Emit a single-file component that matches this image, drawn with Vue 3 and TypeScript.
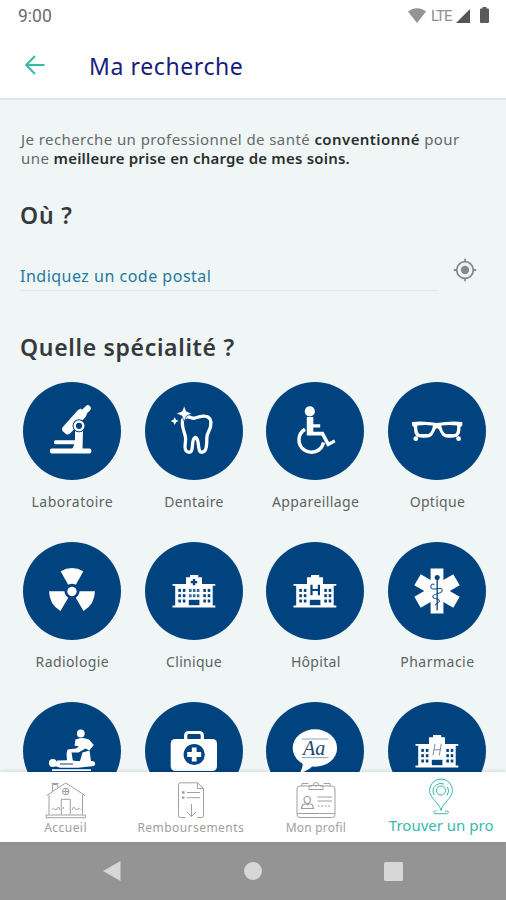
<script setup lang="ts">
type IconName =
  | 'microscope' | 'tooth' | 'wheelchair' | 'glasses'
  | 'radiation' | 'clinic' | 'hospital' | 'starOfLife'
  | 'physio' | 'kit' | 'speech' | 'centre'

interface Speciality {
  label?: string
  icon: IconName
  spacing?: string
}

interface Tab {
  label: string
  icon: 'home' | 'document' | 'badge' | 'pin'
  active: boolean
  spacing: string
}

const specialities: Speciality[] = [
  { label: 'Laboratoire', icon: 'microscope', spacing: '0.5px' },
  { label: 'Dentaire', icon: 'tooth', spacing: '0.35px' },
  { label: 'Appareillage', icon: 'wheelchair', spacing: '0.4px' },
  { label: 'Optique', icon: 'glasses', spacing: '0.3px' },
  { label: 'Radiologie', icon: 'radiation', spacing: '0.4px' },
  { label: 'Clinique', icon: 'clinic', spacing: '0.3px' },
  { label: 'Hôpital', icon: 'hospital', spacing: '0.3px' },
  { label: 'Pharmacie', icon: 'starOfLife', spacing: '0.5px' },
  { icon: 'physio' },
  { icon: 'kit' },
  { icon: 'speech' },
  { icon: 'centre' },
]

const tabs: Tab[] = [
  { label: 'Accueil', icon: 'home', active: false, spacing: '0.45px' },
  { label: 'Remboursements', icon: 'document', active: false, spacing: '0.45px' },
  { label: 'Mon profil', icon: 'badge', active: false, spacing: '0.2px' },
  { label: 'Trouver un pro', icon: 'pin', active: true, spacing: '0px' },
]

const windowColumns = [33.3, 37.8, 58.3, 62.7]
const windowRows = [51.6, 56.9, 62.2]
</script>

<template>
  <div class="phone">
    <div class="status">
      <span class="clock">9:00</span>
      <div class="signals">
        <svg width="18" height="15" viewBox="0 0 18 15"><path d="M0 3.600C5-1 13-1 18 3.600L9 15Z" fill="#949494" /></svg>
        <span class="lte">LTE</span>
        <svg class="cell" width="14" height="14" viewBox="0 0 14 14"><path d="M14 0V14H0Z" fill="#555" /></svg>
        <svg width="9" height="16" viewBox="0 0 9 16"><path d="M2.500 0h4v1.600H8q1 0 1 1V15q0 1-1 1H1q-1 0-1-1V2.600q0-1 1-1h1.500z" fill="#5a5a5a" /></svg>
      </div>
    </div>

    <header class="header">
      <svg class="back" width="20" height="20" viewBox="0 0 20 20"><path d="M19.500 10H1.500M10 1L1.200 10L10 19" fill="none" stroke="#35b9ab" stroke-width="2" /></svg>
      <h1>Ma recherche</h1>
    </header>

    <main class="content">
      <p class="intro">
        <span class="line">Je recherche un professionnel de santé <b>conventionné</b> pour</span>
        <span class="line second">une <b>meilleure prise en charge de mes soins.</b></span>
      </p>
      <h2 class="where">Où ?</h2>
      <div class="field">
        <div class="input">Indiquez un code postal</div>
        <svg class="locate" width="24" height="24" viewBox="0 0 24 24" fill="none" stroke="#858a8b">
          <circle cx="12" cy="12" r="8.300" stroke-width="1.800" />
          <path d="M12 .8V4M12 20v3.200M.8 12H4M20 12h3.200" stroke-width="1.800" />
          <circle cx="12" cy="12" r="4.200" fill="#858a8b" stroke="none" />
        </svg>
      </div>
      <h2 class="which">Quelle spécialité ?</h2>

      <div class="grid">
        <div v-for="item in specialities" :key="item.icon" class="cell-item">
          <div class="disc">
            <svg width="98" height="98" viewBox="0 0 98 98" fill="#fff">
              <g v-if="item.icon === 'microscope'">
                <path d="M60.500 30.500L64.800 26.300" stroke="#fff" stroke-width="6" stroke-linecap="round" />
                <path d="M54.500 28.500L57.500 26.500L64 32L62.500 35L48 50.500Q46 53.500 43 52L39.500 49Q38 47 40 44.800Z" />
                <path d="M52 48.500H60L59.500 68H48.500Q52 63 52 56Z" />
                <circle cx="56" cy="43.800" r="6.500" fill="#00437e" />
                <circle cx="56" cy="43.800" r="4.300" fill="#00437e" stroke="#fff" stroke-width="2.400" />
                <rect x="31" y="58.200" width="22" height="4" rx="1.500" />
                <rect x="27" y="66.500" width="41.300" height="5" rx="1.800" />
              </g>
              <g v-else-if="item.icon === 'tooth'">
                <path d="M37.300 41Q37 35.500 42 34.800C45.500 34.300 46 36.800 49.500 36.200C53 35 56 33.600 60 34.200C65 34.800 66.800 38.500 65.600 44C65 48.500 61.800 51 61.800 56C61.800 60 62 64 60.400 68Q58.500 71 55.500 70C53 68 54 62 52.500 58Q50.300 53 48.300 58C46.800 62 48.300 68 45.500 70Q42.300 71 40.500 68C39 64 41 60 40.600 56C40 50.500 37.500 48 37.300 41Z" fill="none" stroke="#fff" stroke-width="3.300" />
                <path d="M39.200 23.800L41.400 29.200L47 31.600L41.400 34L39.200 39.600L37 34L31 31.600L37 29.200Z" stroke="#00437e" stroke-width=".7" />
                <path d="M29.700 35.300L31 37.700L33.700 39L31 40.300L29.700 43L28.400 40.300L25.600 39L28.400 37.700Z" />
              </g>
              <g v-else-if="item.icon === 'wheelchair'">
                <circle cx="43.800" cy="29.400" r="5.100" />
                <path d="M40.800 35H47.300V42.300H54.200V45.500H47.300V49.700H57.500L63 60L68.200 57.500L69.500 60.300L61.500 64.800L55.500 53.500H40.800Z" />
                <path d="M39 47.200A12.400 12.400 0 1 0 57.500 60.500" fill="none" stroke="#fff" stroke-width="3.500" />
              </g>
              <g v-else-if="item.icon === 'glasses'">
                <path fill-rule="evenodd" d="M24 40Q35 38.600 49 41Q63 38.600 74.300 40V43.500L72.500 45C72.500 49 72 53 69 54.700C65 56 59 56.200 56 54.800C53 53 52 49 50.500 46.700Q49 45.600 47.800 46.700C46.500 49 45 53 42.500 54.800C39 56.200 33 56 29.300 54.700C26.500 53 26 49 25.800 45L24 43.500ZM29.400 43.500C29 47 29.600 51.500 32 52H40C42.700 51.500 44.500 47 45 43.500Q37 42.600 29.400 43.500ZM69 43.500Q61 42.600 53.300 43.500C53.800 47 55.500 51.500 58.500 52H66.500C69 51.500 69.400 47 69 43.500Z" />
                <circle cx="27.800" cy="56.700" r="2.400" /><circle cx="70.600" cy="56.700" r="2.400" />
              </g>
              <g v-else-if="item.icon === 'radiation'" transform="translate(0 -4.300)">
                <g v-for="angle in [0, 120, 240]" :key="angle" :transform="`rotate(${angle} 49 53.500)`">
                  <path d="M45.200 47L37.600 33.600Q49 27.200 60.400 33.600L52.800 47Q49 45.200 45.200 47Z" />
                </g>
                <circle cx="49" cy="53.800" r="4.700" />
              </g>
              <g v-else-if="item.icon === 'clinic' || item.icon === 'hospital' || item.icon === 'centre'" transform="translate(0 -4.700)">
                <path d="M27.500 46.700H41V40H45V37.800H53.200V40H57V46.700H70.300V48.500H67.700V68.300H70.300V70.300H27.500V68.300H30.200V48.500H27.500Z" />
                <g fill="#00437e">
                  <template v-for="x in windowColumns" :key="x">
                    <rect v-for="y in windowRows" :key="y" :x="x" :y="y" width="2.600" height="3" />
                  </template>
                  <rect x="43.800" y="62.500" width="10.600" height="5.400" />
                </g>
                <g v-if="item.icon === 'clinic'" fill="#00437e">
                  <path d="M47.800 41.700H50.200V43.600H52.200V46H50.200V48H47.800V46H45.800V43.600H47.800Z" />
                  <path d="M44 51.600h2.600v3H44zM47.900 51.600h2.600v3h-2.600zM51.800 51.600h2.600v3h-2.600zM44 56.900h2.600v3H44zM47.900 56.900h2.600v3h-2.600zM51.800 56.900h2.600v3h-2.600z" opacity=".8" />
                </g>
                <path v-else-if="item.icon === 'hospital'" d="M45.500 47.500V58M52.900 47.500V58M45.500 52.700H52.900" stroke="#00437e" stroke-width="2.200" />
                <path v-else d="M47 46.500L45 58M53.300 46.500L51.300 58M46 52.500H52.400" stroke="#7d8da8" stroke-width="1" />
              </g>
              <g v-else-if="item.icon === 'starOfLife'" transform="translate(0 -4.500)">
                <rect v-for="angle in [0, 60, 120]" :key="angle" x="42.600" y="31" width="12.800" height="45" :transform="`rotate(${angle} 49 53.500)`" />
                <g fill="none" stroke="#00437e">
                  <path d="M49.200 40V73" stroke-width="1.300" />
                  <path d="M46.500 47C43 45 41 51 45 51.500C50 52 54 49 54.200 53C54 57 45 55.500 44.800 59C45 62 51.500 60.500 51.500 63.500C51 66 47 65.500 47.500 68" stroke-width="1.200" opacity=".8" />
                </g>
                <circle cx="49.200" cy="40" r="2.500" fill="#00437e" />
              </g>
              <g v-else-if="item.icon === 'physio'">
                <circle cx="57.800" cy="31.500" r="3.900" />
                <path d="M52.500 37.500Q59 34.500 66 37.500L70.800 43L66.300 48.500L62.500 46.500L55.500 50.500L48.500 50.500L50 59.500L57 61V64H44.500L43.500 52L44.500 47.500L53 46.500L56 44.500L51.500 43.500Z" />
                <path d="M59.500 50.500L66.500 48.500L68 59H57Z" />
                <circle cx="29.800" cy="61" r="3.900" />
                <path d="M34 58.600Q45 57.500 54 59L70 59Q74 61 71 64L55 65.800H37Q33 64 31 64Z" />
                <path d="M37 62H50" stroke="#00437e" />
                <rect x="29" y="67.200" width="39" height="1.800" />
              </g>
              <g v-else-if="item.icon === 'kit'">
                <path d="M40.700 38V33.500Q40.700 30.500 43.700 30.500H54.300Q57.300 30.500 57.300 33.500V38" fill="none" stroke="#fff" stroke-width="3.200" />
                <rect x="25.700" y="37" width="46.300" height="32" rx="4.500" />
                <circle cx="49.200" cy="52.500" r="10.600" fill="#00437e" />
                <path d="M46.800 45.500H51.600V50.100H56.200V54.900H51.600V59.500H46.800V54.900H42.200V50.100H46.800Z" />
              </g>
              <g v-else>
                <ellipse cx="48.900" cy="46" rx="22.200" ry="18.800" />
                <path d="M37 60Q37 66 33.500 71.500Q42 69 48 63Z" />
                <path d="M35.800 37H62.500M35.800 55.600H62.500" stroke="#8ca4c2" stroke-width="1" />
                <text x="37" y="52.700" class="script">Aa</text>
              </g>
            </svg>
          </div>
          <span v-if="item.label" class="label" :style="{ letterSpacing: item.spacing }">{{ item.label }}</span>
        </div>
      </div>
    </main>

    <nav class="tabs">
      <div v-for="tab in tabs" :key="tab.label" class="tab" :class="{ active: tab.active }">
        <svg width="42" height="38" viewBox="0 0 42 38" fill="none" stroke="currentColor" stroke-width="1">
          <g v-if="tab.icon === 'home'">
            <path d="M1.500 14.500L20.700 2L40 14.500M4 14V33.500M37.500 14V33.500M7.500 10V3.500H12.700V6.500M6.800 2.500H13.500" />
            <rect x="1.300" y="34" width="39" height="2.700" />
            <circle cx="20.700" cy="10.500" r="3.300" /><path d="M17.500 10.500H24M20.700 7.300V13.700" />
            <path d="M16.300 33.500V18.300H25.300V33.500M18.300 26V28M6.500 29L8.500 27.300L11 29L13.500 26L15 29M27 29L28.700 26L31.500 29L34 27.300L35.500 29" />
          </g>
          <g v-else-if="tab.icon === 'document'">
            <path d="M15.500 36.500H10.500Q8.500 36.500 8.500 34.500V3.500Q8.500 1.800 10.500 1.800H27.500L33.500 7.500V34.500Q33.500 36.500 31.500 36.500H27M27.500 2V7.500H33.500M17 11.500H30M17 16.700H30M21.500 23V35.500M17 31L21.500 35.500L26 31" />
            <path d="M12 11.500h2.500M12 16.700h2.500" stroke-width="2.300" />
          </g>
          <g v-else-if="tab.icon === 'badge'">
            <path d="M17 5H5Q2 5 2 8V33.500Q2 36.500 5 36.500H37.500Q40 36.500 40 33.500V8Q40 5 37.500 5H25M2 32.500H40M14 8.500V4.500H28V8.500ZM7 5V2.500H13.500M28.500 2.500H35V5M18 4.500Q18 1.500 21 1.500Q24 1.500 24 4.500M21 4V6M22.500 16H37M22.500 20H37" />
            <path d="M22.500 25H35" stroke-dasharray="2 1.500" />
            <path d="M9 18.500Q9 15.500 12.500 15.500Q15.500 15.500 15.500 18.500Q15 22.500 12.500 22.500Q9.500 22.500 9 18.500ZM6.500 27.500L7.500 24L11 22.500L12.500 24L14 22.500L17.500 24L18.500 27.500Z" stroke-width="1.200" />
          </g>
          <g v-else>
            <path d="M21 32.500C19.500 25 9.500 20 9.500 12.500A11.500 11.500 0 0 1 32.500 12.500C32.500 20 22.500 25 21 32.500ZM14 17Q11.500 11 15.500 7.500Q19 4 24 6M27.500 9Q30 13 27 17.500M16.500 33H14.500Q12.500 34.500 14.500 35.700H27.500Q29.500 34.500 27.500 33H25" />
            <circle cx="21" cy="12.500" r="4.500" />
          </g>
        </svg>
        <span :style="{ letterSpacing: tab.spacing }">{{ tab.label }}</span>
      </div>
    </nav>

    <div class="system">
      <svg width="18" height="20" viewBox="0 0 18 20"><path d="M17.500 0V20L0 10Z" fill="#d7d7d7" /></svg>
      <svg width="18" height="18" viewBox="0 0 18 18"><circle cx="9" cy="9" r="9" fill="#d7d7d7" /></svg>
      <svg width="19" height="19" viewBox="0 0 19 19"><rect width="19" height="19" rx="1.500" fill="#d7d7d7" /></svg>
    </div>
  </div>
</template>

<style>
body { margin: 0; overflow: hidden; }
</style>

<style scoped>
.phone { display: flex; flex-direction: column; width: 506px; height: 900px; overflow: hidden; background: #fff; font-family: "Noto Sans", "Open Sans", sans-serif; }
.phone svg { display: block; flex: none; }
.status { display: flex; flex: none; justify-content: space-between; height: 32px; padding: 0 17px 0 18px; box-sizing: border-box; font-family: Roboto, sans-serif; }
.clock { font-size: 17.5px; line-height: 32px; color: #6b6b6b; }
.signals { display: flex; align-items: center; height: 30px; }
.lte { margin: 2px 4px 0 5px; font-size: 15px; letter-spacing: -1px; line-height: 30px; color: #909090; width: 21px; }
.cell { margin: 2px 10px 0 0; }
.header { display: flex; flex: none; align-items: center; height: 66px; padding: 0 25px; border-bottom: 2px solid #e2e5e5; }
.back { margin-top: -1px; }
h1 { margin: 2px 0 0 44px; font-size: 23px; font-weight: 400; line-height: 32px; letter-spacing: .6px; color: #14217d; white-space: nowrap; }
.content { flex: 1; min-height: 0; overflow: hidden; background: #f0f6f6; }
.intro { margin: 30px 0 0 21px; font-size: 15px; line-height: 19px; color: #64696a; }
.line { display: block; white-space: nowrap; letter-spacing: .42px; }
.intro b { font-weight: 600; color: #2a2e2f; }
.second b { letter-spacing: .2px; }
h2 { font-size: 23px; font-weight: 600; line-height: 32px; color: #36393b; white-space: nowrap; }
.where { margin: 31px 0 0 20px; letter-spacing: .8px; }
.field { display: flex; justify-content: space-between; margin: 26px 29px 0 20px; height: 34px; }
.locate { margin-top: 1px; }
.input { width: 418px; height: 33px; border-bottom: 1px solid #e2e9e9; font-size: 16px; line-height: 39px; letter-spacing: .5px; color: #2379a0; white-space: nowrap; }
.which { margin: 40px 0 0 20px; letter-spacing: .68px; }
.grid { display: grid; grid-template-columns: repeat(4, 121.700px); grid-auto-rows: 160px; padding: 19px 0 0 11px; }
.cell-item { display: flex; flex-direction: column; align-items: center; }
.disc { width: 98px; height: 98px; border-radius: 50%; background: #00437e; }
.label { margin-top: 12px; padding-left: 1px; font-size: 14px; line-height: 20px; color: #5d6364; white-space: nowrap; }
.script { font: italic 20px "Liberation Serif", serif; fill: #24456f; }
.tabs { display: grid; grid-template-columns: repeat(4, 125.200px); flex: none; height: 70px; padding-left: 3px; background: #fff; box-shadow: 0 -1px 4px rgb(0 0 0 / 12%); z-index: 1; color: #a0a0a0; }
.tab { display: flex; flex-direction: column; align-items: center; padding-top: 9px; font-size: 12px; line-height: 16px; white-space: nowrap; }
.tab span { margin-top: 1px; }
.tab.active { padding-top: 6px; font-size: 15px; color: #38b9ac; }
.system { display: flex; flex: none; justify-content: space-between; align-items: center; height: 58px; padding: 0 103px; box-sizing: border-box; background: #949494; }
</style>
